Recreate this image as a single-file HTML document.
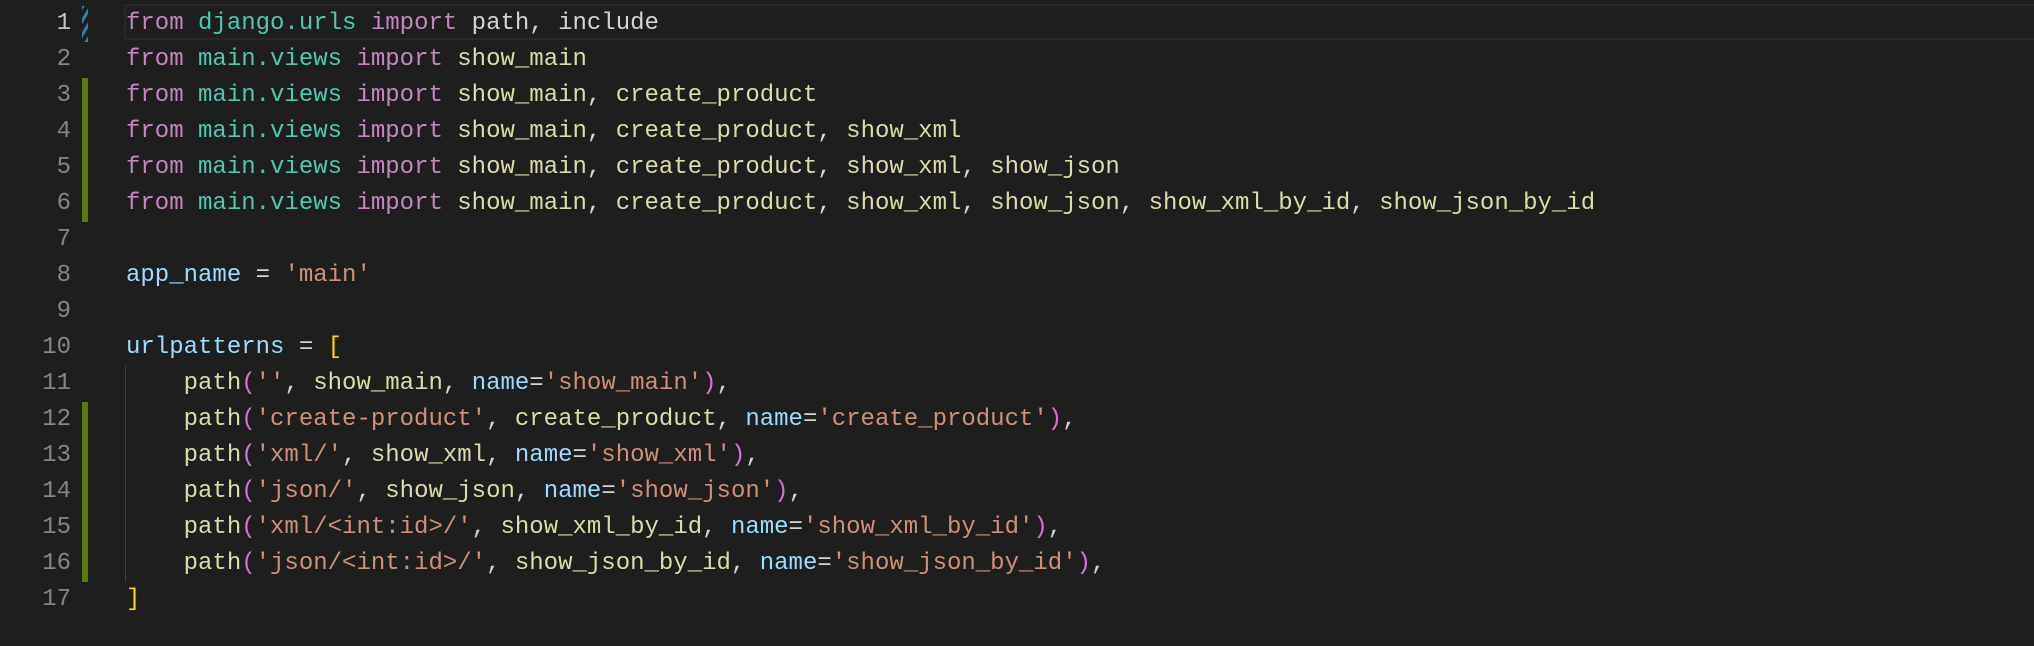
<!DOCTYPE html>
<html><head><meta charset="utf-8"><style>
html,body{margin:0;padding:0;background:#1e1e1e;width:2034px;height:646px;overflow:hidden}
.l{position:absolute;left:0;height:36px;width:2034px;font-family:"Liberation Mono",monospace;font-size:24px;line-height:36px;white-space:pre;color:#d4d4d4}
.n{position:absolute;right:1963px;width:60px;text-align:right;color:#858585}
.c{position:absolute;left:126px}
.g{position:absolute;left:82px;width:6px;height:36px;background:#587c0c}
.h{position:absolute;left:82px;width:6px;top:0;height:36px;background:repeating-linear-gradient(-60deg,#2f7fb0 0 3px,transparent 3px 7px)}
.cur{position:absolute;left:124px;right:0;top:4px;height:36px;border:2px solid #282828;border-right:none;box-sizing:border-box}
.ig{position:absolute;left:125px;width:1px;height:36px;background:#404040}
.k{color:#c586c0}.m{color:#4ec9b0}.f{color:#dcdcaa}.s{color:#ce9178}.v{color:#9cdcfe}.y{color:#ffd700}.p{color:#da70d6}
</style></head><body>
<div class="cur"></div>
<div class="l" style="top:4px"><span class="n" style="color:#c6c6c6">1</span><span class="h"></span><span class="c"><span class="k">from</span> <span class="m">django.urls</span> <span class="k">import</span> path, include</span></div>
<div class="l" style="top:40px"><span class="n">2</span><span class="c"><span class="k">from</span> <span class="m">main.views</span> <span class="k">import</span> <span class="f">show_main</span></span></div>
<div class="l" style="top:76px"><span class="n">3</span><span class="g"></span><span class="c"><span class="k">from</span> <span class="m">main.views</span> <span class="k">import</span> <span class="f">show_main</span>, <span class="f">create_product</span></span></div>
<div class="l" style="top:112px"><span class="n">4</span><span class="g"></span><span class="c"><span class="k">from</span> <span class="m">main.views</span> <span class="k">import</span> <span class="f">show_main</span>, <span class="f">create_product</span>, <span class="f">show_xml</span></span></div>
<div class="l" style="top:148px"><span class="n">5</span><span class="g"></span><span class="c"><span class="k">from</span> <span class="m">main.views</span> <span class="k">import</span> <span class="f">show_main</span>, <span class="f">create_product</span>, <span class="f">show_xml</span>, <span class="f">show_json</span></span></div>
<div class="l" style="top:184px"><span class="n">6</span><span class="g"></span><span class="c"><span class="k">from</span> <span class="m">main.views</span> <span class="k">import</span> <span class="f">show_main</span>, <span class="f">create_product</span>, <span class="f">show_xml</span>, <span class="f">show_json</span>, <span class="f">show_xml_by_id</span>, <span class="f">show_json_by_id</span></span></div>
<div class="l" style="top:220px"><span class="n">7</span></div>
<div class="l" style="top:256px"><span class="n">8</span><span class="c"><span class="v">app_name</span> = <span class="s">'main'</span></span></div>
<div class="l" style="top:292px"><span class="n">9</span></div>
<div class="l" style="top:328px"><span class="n">10</span><span class="c"><span class="v">urlpatterns</span> = <span class="y">[</span></span></div>
<div class="l" style="top:364px"><span class="n">11</span><span class="ig"></span><span class="c">    <span class="f">path</span><span class="p">(</span><span class="s">''</span>, <span class="f">show_main</span>, <span class="v">name</span>=<span class="s">'show_main'</span><span class="p">)</span>,</span></div>
<div class="l" style="top:400px"><span class="n">12</span><span class="g"></span><span class="ig"></span><span class="c">    <span class="f">path</span><span class="p">(</span><span class="s">'create-product'</span>, <span class="f">create_product</span>, <span class="v">name</span>=<span class="s">'create_product'</span><span class="p">)</span>,</span></div>
<div class="l" style="top:436px"><span class="n">13</span><span class="g"></span><span class="ig"></span><span class="c">    <span class="f">path</span><span class="p">(</span><span class="s">'xml/'</span>, <span class="f">show_xml</span>, <span class="v">name</span>=<span class="s">'show_xml'</span><span class="p">)</span>,</span></div>
<div class="l" style="top:472px"><span class="n">14</span><span class="g"></span><span class="ig"></span><span class="c">    <span class="f">path</span><span class="p">(</span><span class="s">'json/'</span>, <span class="f">show_json</span>, <span class="v">name</span>=<span class="s">'show_json'</span><span class="p">)</span>,</span></div>
<div class="l" style="top:508px"><span class="n">15</span><span class="g"></span><span class="ig"></span><span class="c">    <span class="f">path</span><span class="p">(</span><span class="s">'xml/&lt;int:id&gt;/'</span>, <span class="f">show_xml_by_id</span>, <span class="v">name</span>=<span class="s">'show_xml_by_id'</span><span class="p">)</span>,</span></div>
<div class="l" style="top:544px"><span class="n">16</span><span class="g"></span><span class="ig"></span><span class="c">    <span class="f">path</span><span class="p">(</span><span class="s">'json/&lt;int:id&gt;/'</span>, <span class="f">show_json_by_id</span>, <span class="v">name</span>=<span class="s">'show_json_by_id'</span><span class="p">)</span>,</span></div>
<div class="l" style="top:580px"><span class="n">17</span><span class="c"><span class="y">]</span></span></div>
<style>.l{margin-top:2px}.cur{margin-top:0}</style>
</body></html>
